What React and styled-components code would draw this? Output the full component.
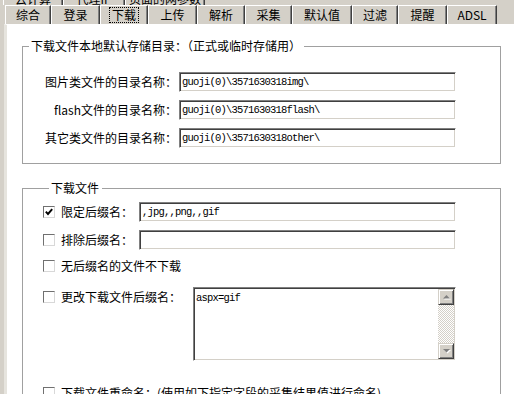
import React from "react";
import styled, { createGlobalStyle } from "styled-components";

const GlobalStyle = createGlobalStyle`
  html, body {
    margin: 0;
    padding: 0;
  }
  body {
    width: 514px;
    height: 394px;
    overflow: hidden;
    background: #d4d0c8;
    font-family: "Noto Sans CJK SC", "Liberation Sans", sans-serif;
    font-size: 12px;
    color: #000;
  }
`;

const Window = styled.div`
  display: flex;
  flex-direction: column;
  height: 394px;
  overflow: hidden;
`;

const TabStrip = styled.div`
  display: flex;
  flex-direction: column;
  height: 24px;
  flex: none;
`;

const BackRowClip = styled.div`
  height: 5px;
  overflow: hidden;
`;

const TabRow = styled.div`
  display: flex;
  padding-left: ${(p) => p.$indent}px;
  margin-top: ${(p) => p.$shift || 0}px;
`;

const Tab = styled.div`
  flex: none;
  box-sizing: border-box;
  width: ${(p) => p.$w}px;
  height: 19px;
  display: flex;
  align-items: center;
  justify-content: center;
  background: #d4d0c8;
  border-top: 1px solid #fff;
  border-left: 1px solid #fff;
  border-right: 1px solid #404040;
  box-shadow: inset -1px 0 0 #808080;
  white-space: nowrap;
  overflow: hidden;
  font-size: 12px;
  line-height: 14px;
`;

const TabText = styled.span`
  padding: 1px 3px;
  outline: ${(p) => (p.$focus ? "1px dotted #000" : "none")};
  outline-offset: -1px;
`;

const Panel = styled.div`
  flex: 1;
  margin-left: 4px;
  border-left: 3px solid #e6e4de;
  border-top: 1px solid #fff;
  background: #fff;
  padding: 14px 0 0 15px;
`;

const Group = styled.fieldset`
  box-sizing: border-box;
  width: 479px;
  min-width: 0;
  margin: ${(p) => p.$mt || 0}px 0 0 0;
  border: 1px solid #a0a0a0;
  padding: ${(p) => p.$pt}px 0 ${(p) => p.$pb}px ${(p) => p.$pl || 0}px;
`;

const Legend = styled.legend`
  margin-left: 6px;
  padding: 0 3px 0 2px;
  font-size: 12px;
  line-height: 14px;
`;

const PathGrid = styled.div`
  display: grid;
  grid-template-columns: 154px 277px;
  column-gap: 2px;
  row-gap: 8px;
  align-items: center;
`;

const FieldLabel = styled.label`
  text-align: right;
  white-space: nowrap;
  line-height: 20px;
`;

const TextInput = styled.input`
  box-sizing: border-box;
  width: ${(p) => p.$w}px;
  height: 20px;
  margin: 0;
  padding: 0 2px;
  border: 1px solid;
  border-color: #808080 #fff #fff #808080;
  box-shadow: inset 1px 1px 0 #404040, inset -1px -1px 0 #d4d0c8;
  background: #fff;
  color: #000;
  font-family: "Liberation Mono", monospace;
  font-size: 10.5px;
  letter-spacing: -0.8px;
  outline: none;
`;

const OptionRow = styled.div`
  display: flex;
  align-items: ${(p) => (p.$top ? "flex-start" : "center")};
  min-height: 20px;
  margin-top: ${(p) => p.$mt || 0}px;
`;

const Check = styled.span`
  flex: none;
  box-sizing: border-box;
  width: 12px;
  height: 12px;
  margin-top: ${(p) => (p.$top ? 4 : 0)}px;
  display: flex;
  align-items: center;
  justify-content: center;
  border: 1px solid;
  border-color: #707070 #d8d8d8 #d8d8d8 #707070;
  background: #fff;
`;

const OptionLabel = styled.label`
  flex: none;
  width: ${(p) => (p.$w ? `${p.$w}px` : "auto")};
  margin-left: 6px;
  line-height: 20px;
  white-space: nowrap;
`;

const AreaFrame = styled.div`
  box-sizing: border-box;
  display: flex;
  width: 263px;
  height: 74px;
  border: 1px solid;
  border-color: #808080 #fff #fff #808080;
  box-shadow: inset 1px 1px 0 #404040, inset -1px -1px 0 #d4d0c8;
  padding: 1px;
  background: #fff;
`;

const AreaText = styled.textarea`
  flex: 1;
  border: none;
  margin: 0;
  padding: 2px 1px;
  resize: none;
  overflow: hidden;
  outline: none;
  background: transparent;
  font-family: "Liberation Mono", monospace;
  font-size: 10.5px;
  letter-spacing: -0.8px;
  line-height: 14px;
`;

const ScrollBar = styled.div`
  flex: none;
  width: 16px;
  display: flex;
  flex-direction: column;
  background: repeating-conic-gradient(#d4d0c8 0 25%, #fff 0 50%) 0 0 / 2px 2px;
`;

const ScrollButton = styled.div`
  box-sizing: border-box;
  width: 16px;
  height: 16px;
  display: flex;
  align-items: center;
  justify-content: center;
  background: #d4d0c8;
  border: 1px solid;
  border-color: #d4d0c8 #404040 #404040 #d4d0c8;
  box-shadow: inset 1px 1px 0 #fff, inset -1px -1px 0 #808080;
`;

const Track = styled.div`
  flex: 1;
`;

function Arrow({ down }) {
  const pts = down ? "1,1 8,1 4.5,4.5" : "1,4.5 8,4.5 4.5,1";
  return (
    <svg width="9" height="6" viewBox="0 0 9 6">
      <polygon points={pts} fill="#fff" transform="translate(1 1)" />
      <polygon points={pts} fill="#808080" />
    </svg>
  );
}

function CheckBox({ checked, top }) {
  return (
    <Check $top={top}>
      {checked && (
        <svg width="8" height="8" viewBox="0 0 8 8">
          <polyline points="0.8,3.6 3,6 7.2,1.2" fill="none" stroke="#000" strokeWidth="1.9" />
        </svg>
      )}
    </Check>
  );
}

const backTabs = [
  { label: "云计算", w: 60 },
  { label: "代理IP", w: 62 },
  { label: "页面的网参数", w: 80 },
];

const frontTabs = [
  { label: "综合", w: 46 },
  { label: "登录", w: 49 },
  { label: "下载", w: 48, active: true },
  { label: "上传", w: 49 },
  { label: "解析", w: 48 },
  { label: "采集", w: 47 },
  { label: "默认值", w: 60 },
  { label: "过滤", w: 46 },
  { label: "提醒", w: 49 },
  { label: "ADSL", w: 50 },
];

const paths = [
  { label: "图片类文件的目录名称：", value: "guoji(0)\\3571630318img\\" },
  { label: "flash文件的目录名称：", value: "guoji(0)\\3571630318flash\\" },
  { label: "其它类文件的目录名称：", value: "guoji(0)\\3571630318other\\" },
];

export default function App() {
  return (
    <Window>
      <GlobalStyle />
      <TabStrip>
        <BackRowClip>
          <TabRow $indent={3} $shift={-11}>
            {backTabs.map((t) => (
              <Tab key={t.label} $w={t.w}>
                <TabText>{t.label}</TabText>
              </Tab>
            ))}
          </TabRow>
        </BackRowClip>
        <TabRow $indent={5}>
          {frontTabs.map((t) => (
            <Tab key={t.label} $w={t.w}>
              <TabText $focus={t.active}>{t.label}</TabText>
            </Tab>
          ))}
        </TabRow>
      </TabStrip>

      <Panel>
        <Group $pt={19} $pb={15}>
          <Legend>下载文件本地默认存储目录：（正式或临时存储用）</Legend>
          <PathGrid>
            {paths.map((p) => (
              <React.Fragment key={p.label}>
                <FieldLabel>{p.label}</FieldLabel>
                <TextInput $w={277} defaultValue={p.value} />
              </React.Fragment>
            ))}
          </PathGrid>
        </Group>

        <Group $mt={17} $pt={7} $pb={20} $pl={20}>
          <Legend>下载文件</Legend>
          <OptionRow>
            <CheckBox checked />
            <OptionLabel $w={78}>限定后缀名：</OptionLabel>
            <TextInput $w={317} defaultValue=",jpg,,png,,gif" />
          </OptionRow>
          <OptionRow $mt={8}>
            <CheckBox />
            <OptionLabel $w={78}>排除后缀名：</OptionLabel>
            <TextInput $w={317} defaultValue="" />
          </OptionRow>
          <OptionRow $mt={6}>
            <CheckBox />
            <OptionLabel>无后缀名的文件不下载</OptionLabel>
          </OptionRow>
          <OptionRow $mt={11} $top>
            <CheckBox top />
            <OptionLabel $w={132}>更改下载文件后缀名：</OptionLabel>
            <AreaFrame>
              <AreaText defaultValue="aspx=gif" />
              <ScrollBar>
                <ScrollButton>
                  <Arrow />
                </ScrollButton>
                <Track />
                <ScrollButton>
                  <Arrow down />
                </ScrollButton>
              </ScrollBar>
            </AreaFrame>
          </OptionRow>
          <OptionRow $mt={22} $top>
            <CheckBox top />
            <OptionLabel>下载文件重命名：(使用如下指定字段的采集结果值进行命名)</OptionLabel>
          </OptionRow>
        </Group>
      </Panel>
    </Window>
  );
}
